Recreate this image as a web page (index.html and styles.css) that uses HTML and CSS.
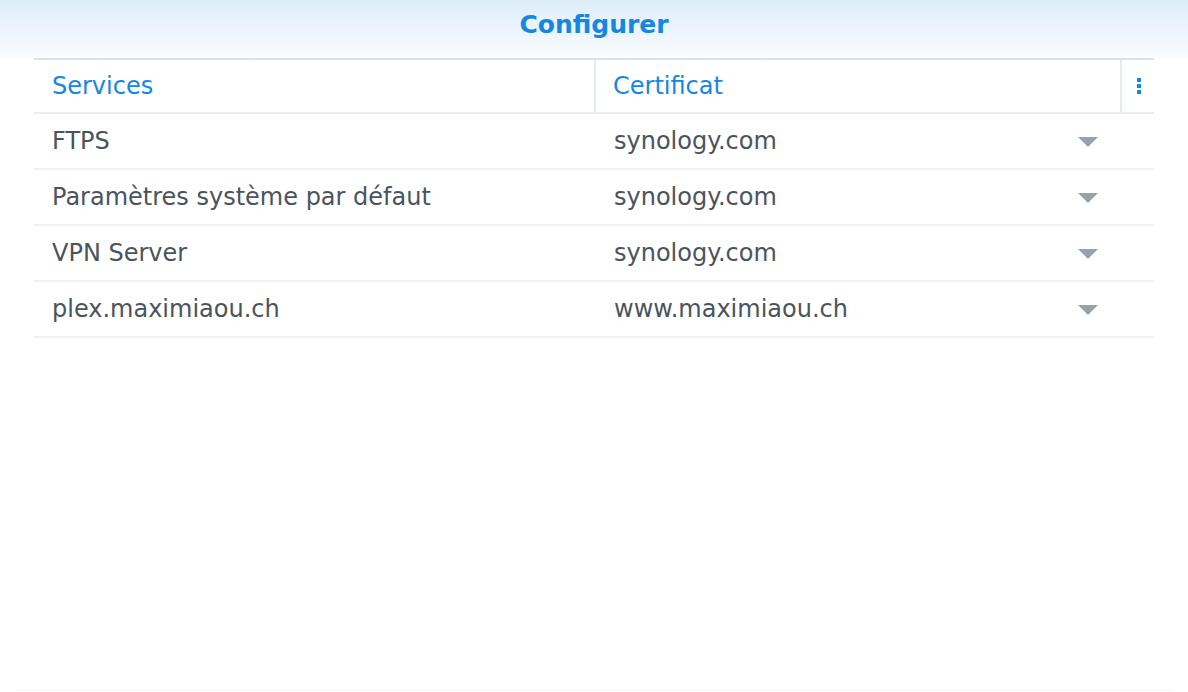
FILE: index.html
```html
<!DOCTYPE html>
<html lang="fr">
<head>
  <meta charset="UTF-8" />
  <title>Configurer</title>
  <link rel="stylesheet" href="styles.css">
</head>
<body>
  <div class="dialog">
    <!-- Titre de la fenêtre -->
    <div class="title-bar">Configurer</div>

    <div class="grid">
      <div class="grid-head">
        <div class="col col-service">Services</div>
        <div class="col col-cert">Certificat</div>
        <div class="col col-menu">
          <span class="kebab"><i></i><i></i><i></i></span>
        </div>
      </div>

      <div class="row">
        <div class="col col-service">FTPS</div>
        <div class="col col-cert">synology.com</div>
        <div class="col col-arrow"><span class="caret"></span></div>
      </div>
      <div class="row">
        <div class="col col-service">Paramètres système par défaut</div>
        <div class="col col-cert">synology.com</div>
        <div class="col col-arrow"><span class="caret"></span></div>
      </div>
      <div class="row">
        <div class="col col-service">VPN Server</div>
        <div class="col col-cert">synology.com</div>
        <div class="col col-arrow"><span class="caret"></span></div>
      </div>
      <div class="row">
        <div class="col col-service">plex.maximiaou.ch</div>
        <div class="col col-cert">www.maximiaou.ch</div>
        <div class="col col-arrow"><span class="caret"></span></div>
      </div>
    </div>

    <div class="footer-line"></div>
  </div>
</body>
</html>
```

FILE: styles.css
```css
/* Base */
body {
  margin: 0;
  padding: 0;
  background: #fff;
  font-family: "DejaVu Sans", Verdana, sans-serif;
}
.dialog {
  width: 1188px;
  height: 692px;
  display: flex;
  flex-direction: column;
}
/* Barre de titre avec dégradé bleu clair */
.title-bar {
  height: 58px;
  line-height: 50px;
  box-sizing: border-box;
  text-align: center;
  font-size: 25px;
  font-weight: bold;
  color: #1686e3;
  background: linear-gradient(to bottom, #ddedfa 0%, #f4f9fe 80%, #fbfdff 100%);
}
/* Tableau */
.grid {
  margin: 0 34px;
}
.grid-head {
  display: flex;
  height: 56px;
  box-sizing: border-box;
  border-top: 2px solid #d9e2ec;
  border-bottom: 2px solid #e9eef3;
  color: #1686e3;
}
.grid-head .col {
  display: flex;
  align-items: center;
  padding-bottom: 1px;
}
.grid-head .col-service {
  border-right: 2px solid #e3ebf3;
}
.grid-head .col-cert {
  border-right: 2px solid #e3ebf3;
}
.col {
  font-size: 24px;
  box-sizing: border-box;
}
.col-service {
  width: 562px;
  padding-left: 18px;
}
.col-cert {
  width: 526px;
  padding-left: 17px;
}
.col-menu {
  flex: 1;
  justify-content: center;
}
.kebab {
  display: flex;
  flex-direction: column;
  gap: 2px;
  margin-left: 1px;
}
.kebab i {
  display: block;
  width: 4px;
  height: 4px;
  background: #1686e3;
}
.row {
  display: flex;
  align-items: center;
  height: 56px;
  border-bottom: 2px solid #eef1f4;
  box-sizing: border-box;
  color: #4b535c;
}
.row .col-cert {
  padding-left: 18px;
  width: 482px;
}
.col-arrow {
  width: 44px;
  display: flex;
  padding-top: 2px;
}
.caret {
  width: 0;
  height: 0;
  border-left: 10px solid transparent;
  border-right: 10px solid transparent;
  border-top: 10px solid #9aa1aa;
}
.footer-line {
  margin: auto 16px 0;
  height: 2px;
  background: #f9f9f9;
  margin-bottom: 1px;
}
```
